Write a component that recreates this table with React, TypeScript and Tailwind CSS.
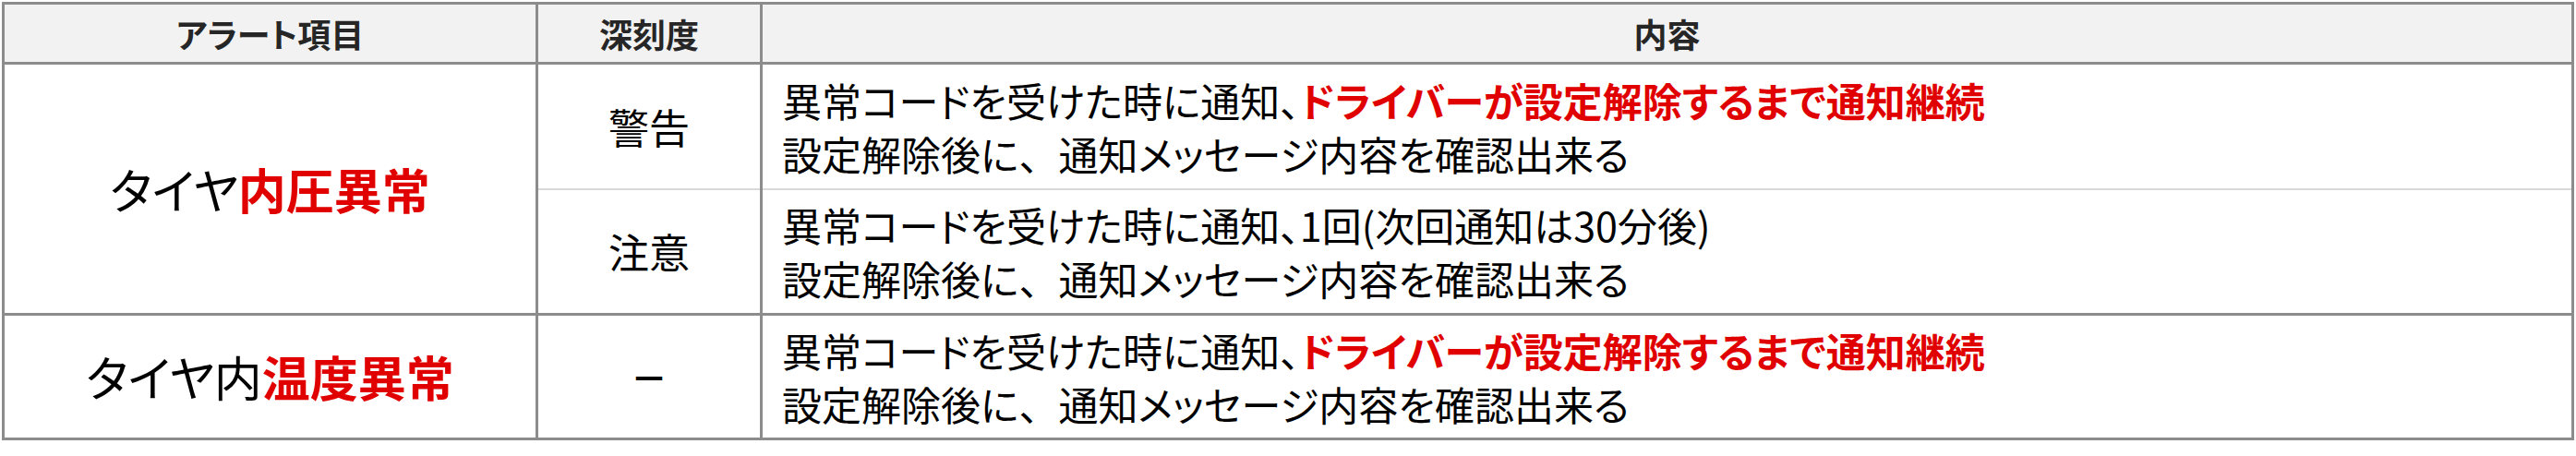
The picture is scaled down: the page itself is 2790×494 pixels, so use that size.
const red = "font-bold text-[#e00000]";
const line = "block leading-[58px] whitespace-nowrap";
const cell = "border-[3px] border-[#8c8c8c]";

// full-width comma, without the proportional kana spacing
const Comma = () => <span className="[font-feature-settings:normal]">、</span>;

const release = (
  <span className={line}>
    設定解除後に<Comma />通知メッセージ内容を確認出来る
  </span>
);

const persistent = (
  <span className={line}>
    異常コードを受けた時に通知、<span className={red}>ドライバーが設定解除するまで通知継続</span>
  </span>
);

export default function App() {
  return (
    <div className="h-[494px] w-[2790px] bg-white pl-[2px] pt-[2px] font-['Noto_Sans_CJK_JP',sans-serif] text-black [font-feature-settings:'palt']">
      <table className="w-[2786px] table-fixed border-collapse">
        <colgroup>
          <col className="w-[578px]" />
          <col className="w-[243px]" />
          <col />
        </colgroup>
        <thead>
          <tr className="h-[65px] bg-[#f2f2f2] text-[36px] text-[#262626]">
            <th className={`${cell} font-bold`}>アラート項目</th>
            <th className={`${cell} font-bold`}>深刻度</th>
            <th className={`${cell} font-bold`}>内容</th>
          </tr>
        </thead>
        <tbody>
          <tr className="h-[136px]">
            <td rowSpan={2} className={`${cell} text-center text-[52px]`}>
              タイヤ<span className={red}>内圧異常</span>
            </td>
            <td className={`${cell} border-b-2 border-b-[#d9d9d9] text-center text-[44px]`}>警告</td>
            <td className={`${cell} border-b-2 border-b-[#d9d9d9] pl-[21px] text-[43px]`}>
              {persistent}
              {release}
            </td>
          </tr>
          <tr className="h-[136px]">
            <td className={`${cell} border-t-2 border-t-[#d9d9d9] text-center text-[44px]`}>注意</td>
            <td className={`${cell} border-t-2 border-t-[#d9d9d9] pl-[21px] text-[43px]`}>
              <span className={line}>異常コードを受けた時に通知、1回(次回通知は30分後)</span>
              {release}
            </td>
          </tr>
          <tr className="h-[135px]">
            <td className={`${cell} text-center text-[52px]`}>
              タイヤ内<span className={red}>温度異常</span>
            </td>
            <td className={`${cell} text-center text-[40px] font-bold`}>－</td>
            <td className={`${cell} pl-[21px] text-[43px]`}>
              {persistent}
              {release}
            </td>
          </tr>
        </tbody>
      </table>
    </div>
  );
}
